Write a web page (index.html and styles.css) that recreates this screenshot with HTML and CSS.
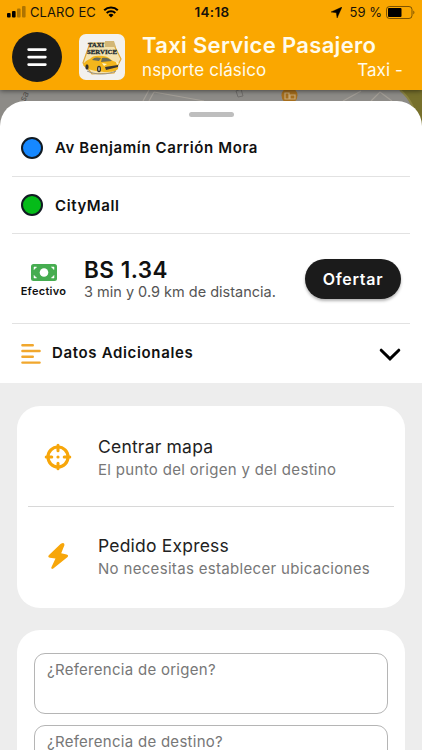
FILE: index.html
```html
<!DOCTYPE html>
<html lang="es">
<head>
    <meta charset="UTF-8">
    <meta name="viewport" content="width=device-width, initial-scale=1.0">
    <title>Taxi Service Pasajero</title>
    <link rel="stylesheet" href="styles.css">
</head>
<body>
    <header class="header">
        <div class="status-bar">
            <div class="status-left">
                <svg class="signal" width="19" height="12" viewBox="0 0 19 12">
                    <rect x="0" y="7" width="3.6" height="4.5" rx="1"/>
                    <rect x="5" y="5" width="3.6" height="6.5" rx="1"/>
                    <rect x="10" y="2.5" width="3.6" height="9" rx="1" opacity=".3"/>
                    <rect x="15" y="0" width="3.6" height="11.5" rx="1" opacity=".3"/>
                </svg>
                <span class="carrier">CLARO EC</span>
                <svg class="wifi" width="16" height="12" viewBox="0 0 16 12">
                    <path d="M1.2 4.3a9.8 9.8 0 0 1 13.6 0" fill="none" stroke="#000" stroke-width="2.1"/>
                    <path d="M3.7 7a6.2 6.2 0 0 1 8.6 0" fill="none" stroke="#000" stroke-width="2"/>
                    <path d="M5.5 9a3.7 3.7 0 0 1 5 0L8 11.6z"/>
                </svg>
            </div>
            <span class="clock">14:18</span>
            <div class="status-right">
                <svg width="11" height="11" viewBox="0 0 11 11">
                    <path d="M11 0 6.1 11 5.3 5.7 0 5z" stroke="#000" stroke-width=".4"/>
                </svg>
                <span class="percent">59 %</span>
                <svg width="29" height="13" viewBox="0 0 29 13">
                    <rect x=".5" y=".5" width="25.5" height="12" rx="3" fill="none" stroke="#000" stroke-opacity=".5"/>
                    <rect x="2" y="2" width="13.5" height="9" rx="1"/>
                    <path d="M27.3 4.6c1.5.5 1.5 3.3 0 3.8z" opacity=".5"/>
                </svg>
            </div>
        </div>
        <div class="toolbar">
            <button class="menu-button" aria-label="Menú">
                <svg width="20" height="18" viewBox="0 0 20 18" stroke="#fff" stroke-width="2.6" stroke-linecap="round">
                    <path d="M1.6 1.6h16.8M1.6 9.1h16.8M1.6 16.6h16.8"/>
                </svg>
            </button>
            <svg class="logo" width="46" height="46" viewBox="0 0 46 46">
                <rect width="46" height="46" rx="7" fill="#f3f1ee"/>
                <path d="M11 9h23l8 16-7 14-22 1L4 29z" fill="#f5e3b0" stroke="#e0a93a" stroke-width="1.2"/>
                <path d="M26 7h9l2 6H26z" fill="#d3b777"/>
                <text class="logo-text" x="9" y="13" textLength="16" lengthAdjust="spacingAndGlyphs">TAXI</text>
                <text class="logo-text" x="8" y="20" textLength="30" lengthAdjust="spacingAndGlyphs">SERVICE</text>
                <path d="M4 31c1-3 4-5 7-6 2-3 6-4 13-3 4 0 7 3 10 5 4 1 6 3 5 8-3 3-9 3-14 3-8-1-18-2-21-7z" fill="#f3b61c"/>
                <path d="M13 26c2-3 5-3 9-2l-2 3zM23 24c4-1 7 0 10 3l-11 1z" fill="#696a58"/>
                <path d="M26 33l13-2v2l-12 3z" fill="#383633"/>
                <path d="M23 29l5 1-3 2zM37 28l3 1-2 2z" fill="#fff7c8"/>
                <ellipse cx="8" cy="33" rx="1.6" ry="2.8" fill="#34322f"/>
                <ellipse cx="20" cy="35" rx="2" ry="3.3" fill="#34322f"/>
                <ellipse cx="20" cy="35" rx="1" ry="2" fill="#aaa"/>
                <path d="M8 37c8 4 21 4 29 0" fill="none" stroke="#99958b"/>
            </svg>
            <div class="titles">
                <h1>Taxi Service Pasajero</h1>
                <div class="marquee"><span class="marquee-main">nsporte clásico</span><span class="marquee-next">Taxi -</span></div>
            </div>
        </div>
    </header>

    <svg class="map" width="422" height="45" viewBox="0 0 422 45">
        <rect width="422" height="45" fill="#8d8b87"/>
        <path d="M400 0h22v45h-5C417 22 410 9 400 0z" fill="#77702b"/>
        <path d="M400 0c10 8 17 20 19 45" fill="none" stroke="#8b8442" stroke-width="2"/>
        <path d="M149 0l-6 11M154 2l50 9M154 2l-5 9M343 11l18-10M371 11l9-9 12 9" fill="none" stroke="#a5a098" stroke-width="1.2"/>
        <path d="M236 1l5-2 2 7-5 1z" fill="none" stroke="#706e6b"/>
        <circle cx="289.5" cy="5.5" r="8" fill="#a76f1d"/>
        <path d="M285 9V3h4v6zm5-4h5v4h-5z" fill="none" stroke="#c5a777" stroke-width="1.2"/>
        <text class="map-label" x="25" y="12" transform="rotate(-66 25 12)">sa</text>
    </svg>

    <main class="sheet">
        <section class="trip">
            <div class="grabber"><div class="handle"></div></div>
            <div class="place">
                <span class="dot dot-origin"></span>
                <span class="place-name">Av Benjamín Carrión Mora</span>
            </div>
            <div class="place">
                <span class="dot dot-destination"></span>
                <span class="place-name">CityMall</span>
            </div>
            <div class="fare">
                <div class="payment">
                    <svg width="26" height="17" viewBox="0 0 26 17">
                        <rect width="26" height="17" rx="2.5" fill="#46ad50"/>
                        <circle cx="13" cy="8.5" r="4.3" fill="#fff"/>
                        <path d="M3 3h2.6L3 5.6zM23 3h-2.6L23 5.6zM3 14h2.6L3 11.4zM23 14h-2.6L23 11.4z" fill="#fff" stroke="#fff" stroke-width=".5"/>
                    </svg>
                    <span class="payment-name">Efectivo</span>
                </div>
                <div class="fare-info">
                    <div class="price">BS 1.34</div>
                    <div class="distance">3 min y 0.9 km de distancia.</div>
                </div>
                <button class="offer-button">Ofertar</button>
            </div>
            <div class="extra">
                <svg width="20" height="20" viewBox="0 0 20 20" fill="none" stroke="#f1a72d" stroke-width="2.4" stroke-linecap="round">
                    <path d="M1.4 1.2h10.4M1.4 7h17.2M1.4 12.8h10.4M1.4 18.6h17.2"/>
                </svg>
                <span class="extra-title">Datos Adicionales</span>
                <svg class="chevron" width="22" height="14" viewBox="0 0 22 14" fill="none" stroke="#000" stroke-width="3" stroke-linecap="round">
                    <path d="M2.2 2.2l8.8 8.6 8.8-8.6"/>
                </svg>
            </div>
        </section>

        <section class="card options">
            <div class="option">
                <svg class="option-icon" width="28" height="28" viewBox="0 0 28 28" fill="none" stroke="#f7a60a" stroke-linecap="round">
                    <circle cx="14" cy="14" r="10" stroke-width="3.2"/>
                    <path d="M14 2.2v5.6M14 20.2v5.6M2.2 14h5.6M20.2 14h5.6" stroke-width="3"/>
                    <circle cx="14" cy="14" r="1.6" fill="#f7a60a" stroke="none"/>
                </svg>
                <div>
                    <div class="option-title">Centrar mapa</div>
                    <div class="option-text">El punto del origen y del destino</div>
                </div>
            </div>
            <div class="option">
                <svg class="option-icon" width="28" height="28" viewBox="0 0 28 28">
                    <path d="M16.5 2 4.8 13.2q-1.4 2 1 2.600l5.700.8-4.200 8.900q-.2 2.300 2 1.100L23.600 15q1.300-2-1-2.600l-5.400-1.200 3.300-8.300Q20.300-.3 16.500 2z" fill="#f7a60a"/>
                </svg>
                <div>
                    <div class="option-title">Pedido Express</div>
                    <div class="option-text">No necesitas establecer ubicaciones</div>
                </div>
            </div>
        </section>

        <section class="card references">
            <textarea class="reference" placeholder="¿Referencia de origen?"></textarea>
            <textarea class="reference" placeholder="¿Referencia de destino?"></textarea>
        </section>
    </main>
</body>
</html>
```
FILE: styles.css
```css
:root {
    --primary-color: #faa700;
    --dark-color: #1b1b1b;
    --background-color: #ededed;
    --line-color: #e2e2e2;
}

* {
    margin: 0;
    padding: 0;
    box-sizing: border-box;
}

body {
    display: flex;
    flex-direction: column;
    height: 750px;
    overflow: hidden;
    font-family: Inter, sans-serif;
    background-color: var(--background-color);
    color: #111;
}

svg {
    display: block;
    flex-shrink: 0;
}

button {
    font-family: inherit;
    border: none;
    color: #fff;
    background-color: var(--dark-color);
}

.header {
    position: relative;
    z-index: 1;
    flex-shrink: 0;
    height: 90px;
    background-color: var(--primary-color);
    box-shadow: 0 1px 5px rgba(0, 0, 0, 0.5);
}

.status-bar {
    display: grid;
    grid-template-columns: 1fr auto 1fr;
    align-items: center;
    height: 24px;
    padding: 0 7px;
    font-size: 13px;
    color: #16120a;
}

.status-left,
.status-right {
    display: flex;
    align-items: center;
}

.status-right {
    justify-content: flex-end;
}

.carrier {
    margin: 0 7px 0 4px;
    letter-spacing: 0.1px;
}

.clock {
    padding-left: 2px;
    font-size: 13.5px;
    font-weight: 600;
    letter-spacing: 0.3px;
}

.percent {
    margin: 0 4px 0 8px;
}

.toolbar {
    display: flex;
    align-items: center;
    height: 66px;
    padding-left: 12px;
}

.menu-button {
    display: flex;
    align-items: center;
    justify-content: center;
    width: 50px;
    height: 50px;
    border-radius: 50%;
}

.logo {
    margin-left: 17px;
}

.logo-text {
    font: 900 6.5px 'Liberation Serif', serif;
    fill: #1d2b31;
    stroke: #1d2b31;
    stroke-width: 0.3px;
}

.titles {
    flex: 1;
    padding-left: 17px;
    color: #fffbec;
}

h1 {
    font-size: 22px;
    line-height: 26px;
    font-weight: 600;
    letter-spacing: 0.32px;
    white-space: nowrap;
}

.marquee {
    display: flex;
    justify-content: space-between;
    padding-right: 19px;
    font-size: 17px;
    line-height: 24px;
    letter-spacing: 0.1px;
}

.map {
    margin-bottom: -34px;
}

.map-label {
    font-size: 9px;
    fill: #55534f;
}

.sheet {
    position: relative;
    flex: 1;
    min-height: 0;
    overflow: hidden;
}

.trip {
    height: 282px;
    padding: 0 12px;
    border-radius: 25px 25px 0 0;
    background-color: #fff;
}

.grabber {
    display: flex;
    justify-content: center;
    height: 18px;
    padding-top: 11px;
}

.handle {
    width: 45px;
    height: 5px;
    border-radius: 3px;
    background-color: #bebebe;
}

.place {
    display: flex;
    align-items: center;
    height: 57px;
    padding-left: 9px;
    border-bottom: 1px solid var(--line-color);
}

.grabber + .place {
    height: 58px;
}

.dot {
    width: 22px;
    height: 22px;
    margin-right: 12px;
    border: 2px solid #111a22;
    border-radius: 50%;
}

.dot-origin {
    background-color: #1688ff;
}

.dot-destination {
    background-color: #05bb19;
}

.place-name {
    font-size: 15px;
    font-weight: 600;
    letter-spacing: 0.6px;
}

.fare {
    display: flex;
    align-items: center;
    height: 90px;
    padding-right: 9px;
    border-bottom: 1px solid var(--line-color);
}

.payment {
    display: flex;
    flex-direction: column;
    align-items: center;
    width: 63px;
    padding-top: 4px;
}

.payment-name {
    margin-top: 3px;
    font-size: 11px;
    line-height: 14px;
    font-weight: 600;
    letter-spacing: 0.3px;
}

.fare-info {
    flex: 1;
    padding: 2px 0 0 9px;
}

.price {
    font-size: 22.5px;
    line-height: 24px;
    font-weight: 600;
    letter-spacing: 0.5px;
}

.distance {
    font-size: 14.5px;
    line-height: 20px;
    color: #555;
    white-space: nowrap;
}

.offer-button {
    width: 96px;
    height: 40px;
    border-radius: 20px;
    font-size: 16px;
    font-weight: 600;
    letter-spacing: 0.7px;
    box-shadow: 0 2px 3px rgba(0, 0, 0, 0.3);
}

.extra {
    display: flex;
    align-items: center;
    height: 59px;
    padding: 0 9px 0 9px;
}

.extra-title {
    flex: 1;
    padding: 0 0 2px 11px;
    font-size: 15px;
    font-weight: 600;
    letter-spacing: 0.65px;
}

.chevron {
    margin-top: 2px;
}

.card {
    margin: 22px 17px 0;
    border-radius: 23px;
    background-color: #fff;
}

.options {
    height: 202px;
    margin-top: 23px;
    padding: 0 11px;
}

.option {
    display: flex;
    align-items: center;
    height: 100px;
    padding-top: 2px;
}

.option + .option {
    height: 99px;
    padding-top: 0;
    border-top: 1px solid #d8d8d8;
}

.option-icon {
    margin: 0 26px 0 16px;
}

.option-title {
    padding-top: 2px;
    font-size: 17.5px;
    line-height: 22px;
    letter-spacing: 0.2px;
    color: #222;
}

.option-text {
    font-size: 15px;
    line-height: 23px;
    letter-spacing: 0.32px;
    color: #777;
    white-space: nowrap;
}

.references {
    padding: 23px 17px;
}

.reference {
    display: block;
    width: 354px;
    height: 61px;
    margin-bottom: 11px;
    padding: 6px 12px;
    border: 1px solid #b5b5b5;
    border-radius: 11px;
    font: 15px/19px Inter, sans-serif;
    letter-spacing: 0.28px;
    resize: none;
}

.reference::placeholder {
    color: #777;
}
```
